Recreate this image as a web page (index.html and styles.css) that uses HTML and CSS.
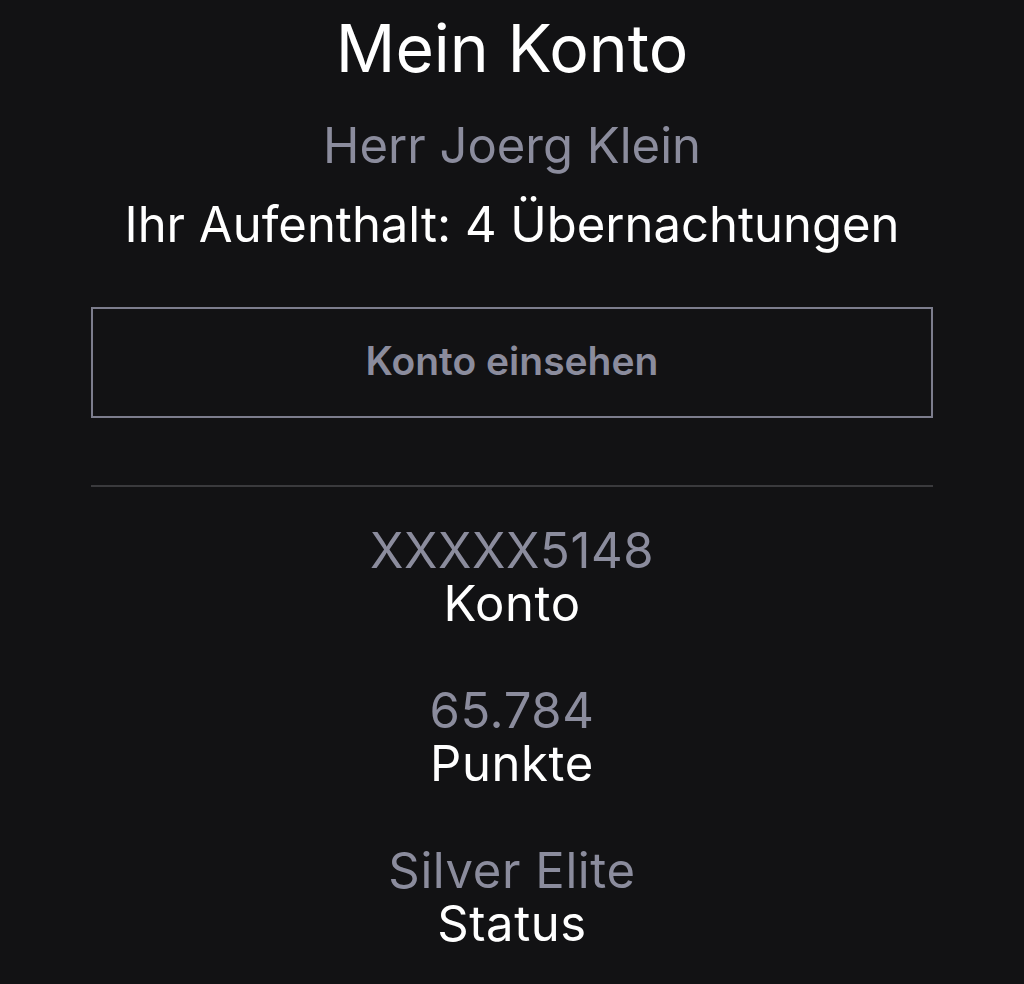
FILE: index.html
```html
<!DOCTYPE html>
<html lang="de">
  <head>
    <meta charset="UTF-8" />
    <meta name="viewport" content="width=device-width, initial-scale=1.0" />
    <title>Mein Konto</title>
    <link rel="stylesheet" href="styles.css">
  </head>
  <body>
    <div class="account">
      <h1 class="title">Mein Konto</h1>
      <p class="guest-name">Herr Joerg Klein</p>
      <p class="stay">Ihr Aufenthalt: 4 Übernachtungen</p>

      <a class="btn-outline" href="#">Konto einsehen</a>

      <hr class="divider" />

      <ul class="stats">
        <li class="stat">
          <span class="stat-value">XXXXX5148</span>
          <span class="stat-label">Konto</span>
        </li>
        <li class="stat">
          <span class="stat-value">65.784</span>
          <span class="stat-label">Punkte</span>
        </li>
        <li class="stat">
          <span class="stat-value">Silver Elite</span>
          <span class="stat-label">Status</span>
        </li>
      </ul>
    </div>
  </body>
</html>
```

FILE: styles.css
```css
html,
body {
  margin: 0;
  padding: 0;
  background: #121214;
}

body {
  font-family: Inter, Lato, sans-serif;
  color: #ffffff;
}

.account {
  max-width: 842px;
  margin: 0 auto;
  padding-top: 8px;
  text-align: center;
}

.title {
  margin: 0;
  font-size: 66px;
  font-weight: 400;
  line-height: 80px;
}

.guest-name {
  margin: 18px 0 0;
  font-size: 49px;
  line-height: 79px;
  color: #8b8c9d;
}

.stay {
  margin: 0;
  font-size: 49px;
  line-height: 79px;
}

.btn-outline {
  display: flex;
  align-items: center;
  justify-content: center;
  box-sizing: border-box;
  height: 111px;
  margin-top: 43px;
  padding-bottom: 4px;
  border: 2px solid #7c7d8d;
  font-size: 39px;
  font-weight: 600;
  color: #8b8c9d;
  text-decoration: none;
}

.divider {
  height: 2px;
  margin: 67px 0 0;
  border: none;
  background: #3a3a3d;
}

.stats {
  display: flex;
  flex-direction: column;
  gap: 54px;
  list-style: none;
  margin: 37px 0 0;
  padding: 0;
}

.stat {
  display: flex;
  flex-direction: column;
  font-size: 49px;
  line-height: 53px;
  letter-spacing: 0.6px;
}

.stat-value {
  color: #8b8c9d;
}
```
